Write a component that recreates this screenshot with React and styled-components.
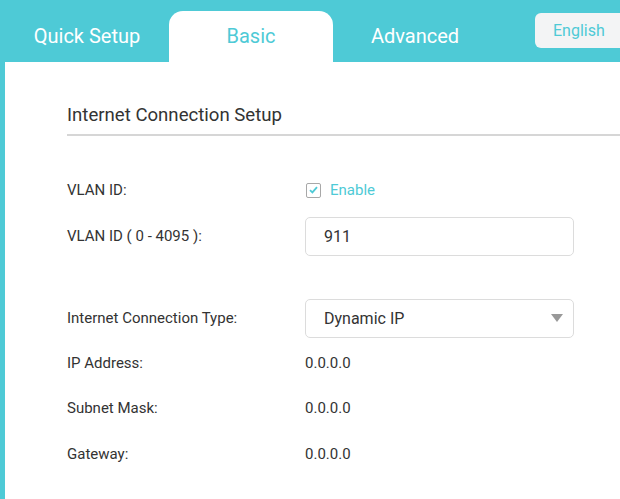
import React from "react";
import styled, { createGlobalStyle } from "styled-components";

const teal = "#4ecad6";

const GlobalStyle = createGlobalStyle`
  html, body {
    margin: 0;
    padding: 0;
    background: ${teal};
    font-family: Roboto, "Liberation Sans", sans-serif;
  }
`;

const Page = styled.div`
  width: 620px;
  height: 499px;
  overflow: hidden;
  background: ${teal};
  display: flex;
  flex-direction: column;
`;

const Header = styled.div`
  height: 62px;
  display: flex;
  align-items: flex-end;
  padding-left: 5px;
  overflow: hidden;
  flex-shrink: 0;
`;

const Tab = styled.div`
  width: 164px;
  height: 51px;
  flex-shrink: 0;
  display: flex;
  align-items: center;
  justify-content: center;
  font-size: 20px;
  color: ${(p) => (p.active ? teal : "#fff")};
  background: ${(p) => (p.active ? "#fff" : "transparent")};
  border-radius: 14px 14px 0 0;
  padding-bottom: 2px;
  box-sizing: border-box;
`;

const LangButton = styled.div`
  margin-left: 38px;
  align-self: flex-start;
  margin-top: 13px;
  width: 100px;
  height: 35px;
  background: #f3f4f5;
  border-radius: 6px;
  color: ${teal};
  font-size: 16px;
  display: flex;
  align-items: center;
  padding-left: 18px;
  box-sizing: border-box;
  flex-shrink: 0;
`;

const Content = styled.div`
  flex: 1;
  margin-left: 5px;
  background: #fff;
  padding: 40px 0 0 62px;
`;

const SectionTitle = styled.div`
  font-size: 18.6px;
  color: #333;
  height: 32px;
  line-height: 26px;
  border-bottom: 2px solid #d6d6d6;
  margin-bottom: 31px;
`;

const Row = styled.div`
  display: grid;
  grid-template-columns: 238px 269px;
  align-items: center;
  height: ${(p) => p.h || 46}px;
  margin-top: ${(p) => p.gap || 0}px;
`;

const Label = styled.div`
  font-size: 15px;
  color: #333;
`;

const Value = styled.div`
  font-size: 15px;
  color: #333;
`;

const CheckWrap = styled.label`
  display: flex;
  align-items: center;
  gap: 9px;
  color: ${teal};
  font-size: 15px;
  margin-left: 1px;
`;

const Box = styled.span`
  width: 15px;
  height: 15px;
  border: 1.5px solid #a8a8a8;
  border-radius: 2px;
  box-sizing: border-box;
  display: flex;
  align-items: center;
  justify-content: center;
`;

const Field = styled.div`
  height: 39px;
  border: 1px solid #dcdcdc;
  border-radius: 5px;
  display: flex;
  align-items: center;
  padding: 0 10px 0 18px;
  font-size: 16px;
  color: #333;
  box-sizing: border-box;
  justify-content: space-between;
`;

const Arrow = styled.span`
  width: 0;
  height: 0;
  border-left: 6px solid transparent;
  border-right: 6px solid transparent;
  border-top: 8px solid #999;
`;

export default function App() {
  return (
    <>
      <GlobalStyle />
      <Page>
        <Header>
          <Tab>Quick Setup</Tab>
          <Tab active>Basic</Tab>
          <Tab>Advanced</Tab>
          <LangButton>English</LangButton>
        </Header>
        <Content>
          <SectionTitle>Internet Connection Setup</SectionTitle>
          <Row>
            <Label>VLAN ID:</Label>
            <CheckWrap>
              <Box>
                <svg width="9" height="8" viewBox="0 0 9 8">
                  <path d="M1 4.2 L3.4 6.4 L8 1.2" fill="none" stroke={teal} strokeWidth="1.8" />
                </svg>
              </Box>
              Enable
            </CheckWrap>
          </Row>
          <Row>
            <Label>VLAN ID ( 0 - 4095 ):</Label>
            <Field>911</Field>
          </Row>
          <Row gap={36}>
            <Label>Internet Connection Type:</Label>
            <Field>
              Dynamic IP
              <Arrow />
            </Field>
          </Row>
          <Row h={44}>
            <Label>IP Address:</Label>
            <Value>0.0.0.0</Value>
          </Row>
          <Row>
            <Label>Subnet Mask:</Label>
            <Value>0.0.0.0</Value>
          </Row>
          <Row>
            <Label>Gateway:</Label>
            <Value>0.0.0.0</Value>
          </Row>
        </Content>
      </Page>
    </>
  );
}
